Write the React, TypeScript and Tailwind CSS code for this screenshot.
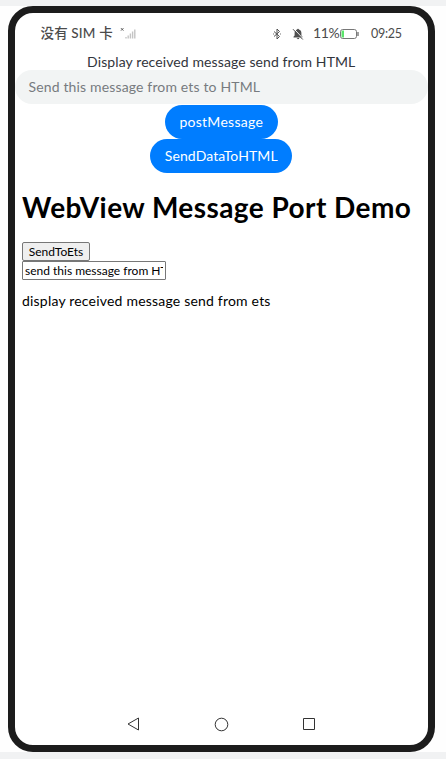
import React from "react";

function SignalIcon() {
  return (
    <svg className="ml-[6px] h-[14px] w-[17px]" viewBox="0 0 17 14">
      <path d="M1 2.200l2.400 2.400M3.400 2.200L1 4.600" stroke="#555" strokeWidth="1" />
      <path d="M6 12.500v-1.500M8.200 12.500V9.500M10.400 12.500V7.500M12.600 12.500V5.500M14.800 12.500V3.500" stroke="#c4c4c4" strokeWidth="1.400" />
    </svg>
  );
}

function StatusBar() {
  return (
    <div className="flex h-[40px] items-center pl-[25.5px] text-[#4b4b4b]">
      <span className="w-[73px] whitespace-nowrap text-[13.5px] font-medium tracking-[0.15px]">没有 SIM 卡</span>
      <SignalIcon />
      <svg className="ml-[135px] mt-px h-[12px] w-[10px]" viewBox="0 0 10 12" fill="none" stroke="#505050" strokeWidth="1">
        <path d="M2 3.500l5.500 5L5 11V1l2.500 2.500-5.500 5M1.200 6h.8M8 6h.8" />
      </svg>
      <svg className="ml-[10px] mt-px h-[12px] w-[12px]" viewBox="0 0 12 12">
        <path d="M6 .7c.6 0 .9.3.9.9 1.700.5 2.500 1.800 2.500 3.500v2.400l1.100 1.300v.6h-9v-.6l1.100-1.300V5.100c0-1.700.8-3 2.500-3.500 0-.6.300-.9.900-.9zM4.800 10.100h2.400c0 .8-.5 1.200-1.200 1.200s-1.200-.4-1.200-1.200z" fill="#505050" />
        <path d="M1.800.7l9.500 10.200" stroke="#fff" strokeWidth="1" />
        <path d="M1 1.200l9.800 10.300" stroke="#505050" strokeWidth="1" />
      </svg>
      <span className="ml-[9.5px] w-[27px] whitespace-nowrap pb-px text-[14px] tracking-[-0.4px]">11%</span>
      <svg className="mt-px h-[10px] w-[19px]" viewBox="0 0 19 10">
        <rect x=".5" y=".5" width="16" height="9" rx="2.200" fill="#fff" stroke="#777" />
        <path d="M2.500 1.500H4v7H2.500a1 1 0 0 1-1-1v-5a1 1 0 0 1 1-1z" fill="#5be36b" />
        <path d="M18 3v4" stroke="#777" strokeWidth="1.400" />
      </svg>
      <span className="ml-[12px] mt-[2px] whitespace-nowrap text-[12.5px] tracking-[-0.25px]">09:25</span>
    </div>
  );
}

function WebContent() {
  return (
    <section className="flex flex-1 flex-col items-start pl-[7px] pt-[14px] text-black">
      <h1 className="h-[40px] whitespace-nowrap text-[28px] font-bold leading-[40px] tracking-[0.43px]">WebView Message Port Demo</h1>
      <button className="mt-[15px] h-[19px] w-[68px] whitespace-nowrap rounded-[2px] border border-[#777] bg-[#efefef] text-[12px] leading-[17px]">SendToEts</button>
      <div className="flex h-[19px] w-[144px] items-center rounded-[1px] border border-[#777] bg-white px-[2px]">
        <span className="w-full overflow-hidden whitespace-nowrap text-[12px] leading-[17px]">send this message from HTML</span>
      </div>
      <p className="mt-[11px] whitespace-nowrap text-[14px] leading-[20px] tracking-[0.2px]">display received message send from ets</p>
    </section>
  );
}

function NavigationBar() {
  return (
    <nav className="flex h-[41px] items-center pb-px pl-[112px]">
      <svg className="h-[14px] w-[13px]" viewBox="0 0 13 14" fill="none" stroke="#333">
        <path d="M1 7l10.500-6v12z" />
      </svg>
      <svg className="ml-[74px] h-[15px] w-[15px]" viewBox="0 0 15 15" fill="none" stroke="#333">
        <circle cx="7.500" cy="7.500" r="6.300" />
      </svg>
      <svg className="ml-[73px] h-[14px] w-[14px]" viewBox="0 0 14 14" fill="none" stroke="#333">
        <path d="M1.500 1.500h11v11h-11z" />
      </svg>
    </nav>
  );
}

export default function App() {
  return (
    <div className="h-[759px] w-[446px] bg-[#f1f2f3] py-[6px] font-[Lato,'Noto_Sans_CJK_SC',sans-serif]">
      <div className="h-[746px] bg-[#fefefe] pl-[8px]">
        <main className="flex h-[746px] w-[426.5px] flex-col overflow-hidden rounded-[25px] border-[7px] border-[#1c1c1c] bg-white">
          <StatusBar />
          <div className="flex h-[17px] items-center justify-center whitespace-nowrap text-[14px] tracking-[0.1px] text-[#32353c]">Display received message send from HTML</div>
          <div className="flex h-[34px] items-center rounded-full bg-[#f2f4f4] pb-px pl-[13.5px] text-[14px] tracking-[0.15px] text-[#777b7f]">
            <span className="whitespace-nowrap">Send this message from ets to HTML</span>
          </div>
          <div className="flex flex-col items-center gap-[0.5px] pt-[0.5px] text-[14px] text-white">
            <button className="h-[34px] w-[113px] rounded-full bg-[#007dff] pb-px tracking-[0.27px]">postMessage</button>
            <button className="h-[34px] w-[142px] rounded-full bg-[#007dff] pb-px tracking-[0.1px]">SendDataToHTML</button>
          </div>
          <WebContent />
          <NavigationBar />
        </main>
      </div>
    </div>
  );
}
